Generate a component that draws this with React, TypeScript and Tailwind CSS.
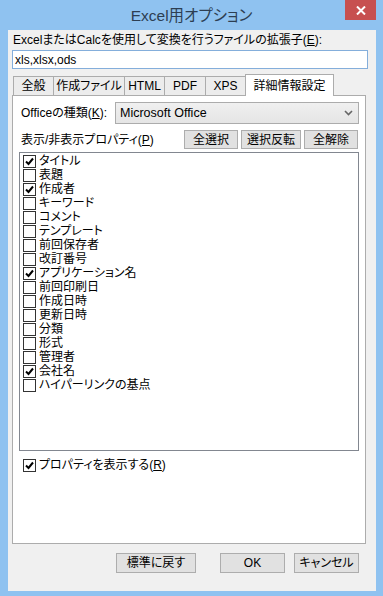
import React from 'react';

const font = "font-['Liberation_Sans','Noto_Sans_CJK_JP',sans-serif] [font-feature-settings:'palt']";

const props = [
  { label: 'タイトル', checked: true },
  { label: '表題', checked: false },
  { label: '作成者', checked: true },
  { label: 'キーワード', checked: false },
  { label: 'コメント', checked: false },
  { label: 'テンプレート', checked: false },
  { label: '前回保存者', checked: false },
  { label: '改訂番号', checked: false },
  { label: 'アプリケーション名', checked: true },
  { label: '前回印刷日', checked: false },
  { label: '作成日時', checked: false },
  { label: '更新日時', checked: false },
  { label: '分類', checked: false },
  { label: '形式', checked: false },
  { label: '管理者', checked: false },
  { label: '会社名', checked: true },
  { label: 'ハイパーリンクの基点', checked: false },
];

const tabs = [
  { label: '全般', w: 'w-[41px]' },
  { label: '作成ファイル', w: 'w-[72px]' },
  { label: 'HTML', w: 'w-[41px]' },
  { label: 'PDF', w: 'w-[42px]' },
  { label: 'XPS', w: 'w-[41px]' },
];

function Check({ checked }: { checked: boolean }) {
  return (
    <span className="w-[13px] h-[13px] border border-[#333] bg-white flex items-center justify-center shrink-0">
      {checked && (
        <svg width="9" height="9" viewBox="0 0 9 9">
          <path d="M1 4.5 L3.5 7 L8 1.5" fill="none" stroke="#000" strokeWidth="2" />
        </svg>
      )}
    </span>
  );
}

function Btn({ children, w }: { children: React.ReactNode; w: string }) {
  return (
    <div className={`${w} h-[19px] border border-[#adadad] bg-[#e1e1e1] flex items-center justify-center text-[12px] text-black`}>
      {children}
    </div>
  );
}

export default function App() {
  return (
    <div className={`w-[383px] h-[596px] bg-[#8fc2f0] flex flex-col ${font} text-[12px] text-black`}>
      {/* title bar */}
      <div className="h-[30px] relative flex items-center justify-center">
        <span className="text-[15.5px] text-[#2d3e52] pt-[1px]">Excel用オプション</span>
        <div className="absolute right-[7px] top-0 w-[31px] h-[20px] bg-[#c75050] flex items-center justify-center">
          <svg width="10" height="9" viewBox="0 0 10 9">
            <path d="M1 0.5 L9 8.5 M9 0.5 L1 8.5" stroke="#fff" strokeWidth="2" />
          </svg>
        </div>
      </div>

      {/* client */}
      <div className="mx-[8px] mr-[7px] mb-[5px] flex-1 bg-[#f0f0f0] flex flex-col">
        <div className="pl-[5px] pt-[3px] h-[20px] leading-[14px]">
          ExcelまたはCalcを使用して変換を行うファイルの拡張子(<span className="underline">E</span>):
        </div>
        <div className="ml-[4px] w-[356px] h-[19px] border border-[#84aedb] bg-white pl-[2px] flex items-center">
          xls,xlsx,ods
        </div>

        {/* tabs */}
        <div className="ml-[5px] mt-[4px] h-[22px] flex items-end relative z-10">
          {tabs.map((t) => (
            <div
              key={t.label}
              className={`${t.w} h-[19px] border border-[#acacac] border-b-0 -mr-px bg-[#ececec] flex items-center justify-center`}
            >
              {t.label}
            </div>
          ))}
          <div className="w-[89px] h-[22px] border border-[#acacac] border-b-0 bg-white flex items-center justify-center -mb-px">
            詳細情報設定
          </div>
        </div>

        {/* panel */}
        <div className="ml-[4px] w-[354px] h-[449px] border border-[#acacac] bg-white px-[6px] pt-[6px] flex flex-col">
          <div className="flex items-center h-[22px]">
            <span className="w-[96px] pl-[2px]">
              Officeの種類(<span className="underline">K</span>):
            </span>
            <div className="flex-1 h-[22px] border border-[#acacac] bg-gradient-to-b from-[#f0f0f0] to-[#e5e5e5] flex items-center justify-between pl-[4px] pr-[5px] text-[12.5px]">
              <span>Microsoft Office</span>
              <svg width="9" height="6" viewBox="0 0 9 6">
                <path d="M1 1 L4.5 4.5 L8 1" fill="none" stroke="#666" strokeWidth="1.6" />
              </svg>
            </div>
          </div>
          <div className="flex items-center mt-[6px] h-[19px]">
            <span className="pl-[2px]">
              表示/非表示プロパティ(<span className="underline">P</span>)
            </span>
            <div className="ml-auto flex gap-[3px] mr-[1px]">
              <Btn w="w-[54px]">全選択</Btn>
              <Btn w="w-[60px]">選択反転</Btn>
              <Btn w="w-[54px]">全解除</Btn>
            </div>
          </div>
          <div className="mt-[3px] h-[299px] border border-[#828790] bg-white pt-[1px] pl-[3px] flex flex-col">
            {props.map((p) => (
              <div key={p.label} className="h-[14px] flex items-center gap-[3px] leading-none">
                <Check checked={p.checked} />
                <span>{p.label}</span>
              </div>
            ))}
          </div>
          <div className="mt-[7px] ml-[4px] flex items-center gap-[3px] h-[14px]">
            <Check checked />
            <span>
              プロパティを表示する(<span className="underline">R</span>)
            </span>
          </div>
        </div>

        {/* buttons */}
        <div className="mt-[9px] flex pl-[108px]">
          <div className="w-[80px] h-[20px] border border-[#adadad] bg-[#e1e1e1] flex items-center justify-center">標準に戻す</div>
          <div className="ml-[24px] w-[65px] h-[20px] border border-[#adadad] bg-[#e1e1e1] flex items-center justify-center">OK</div>
          <div className="ml-[9px] w-[65px] h-[20px] border border-[#adadad] bg-[#e1e1e1] flex items-center justify-center">キャンセル</div>
        </div>
      </div>
    </div>
  );
}
